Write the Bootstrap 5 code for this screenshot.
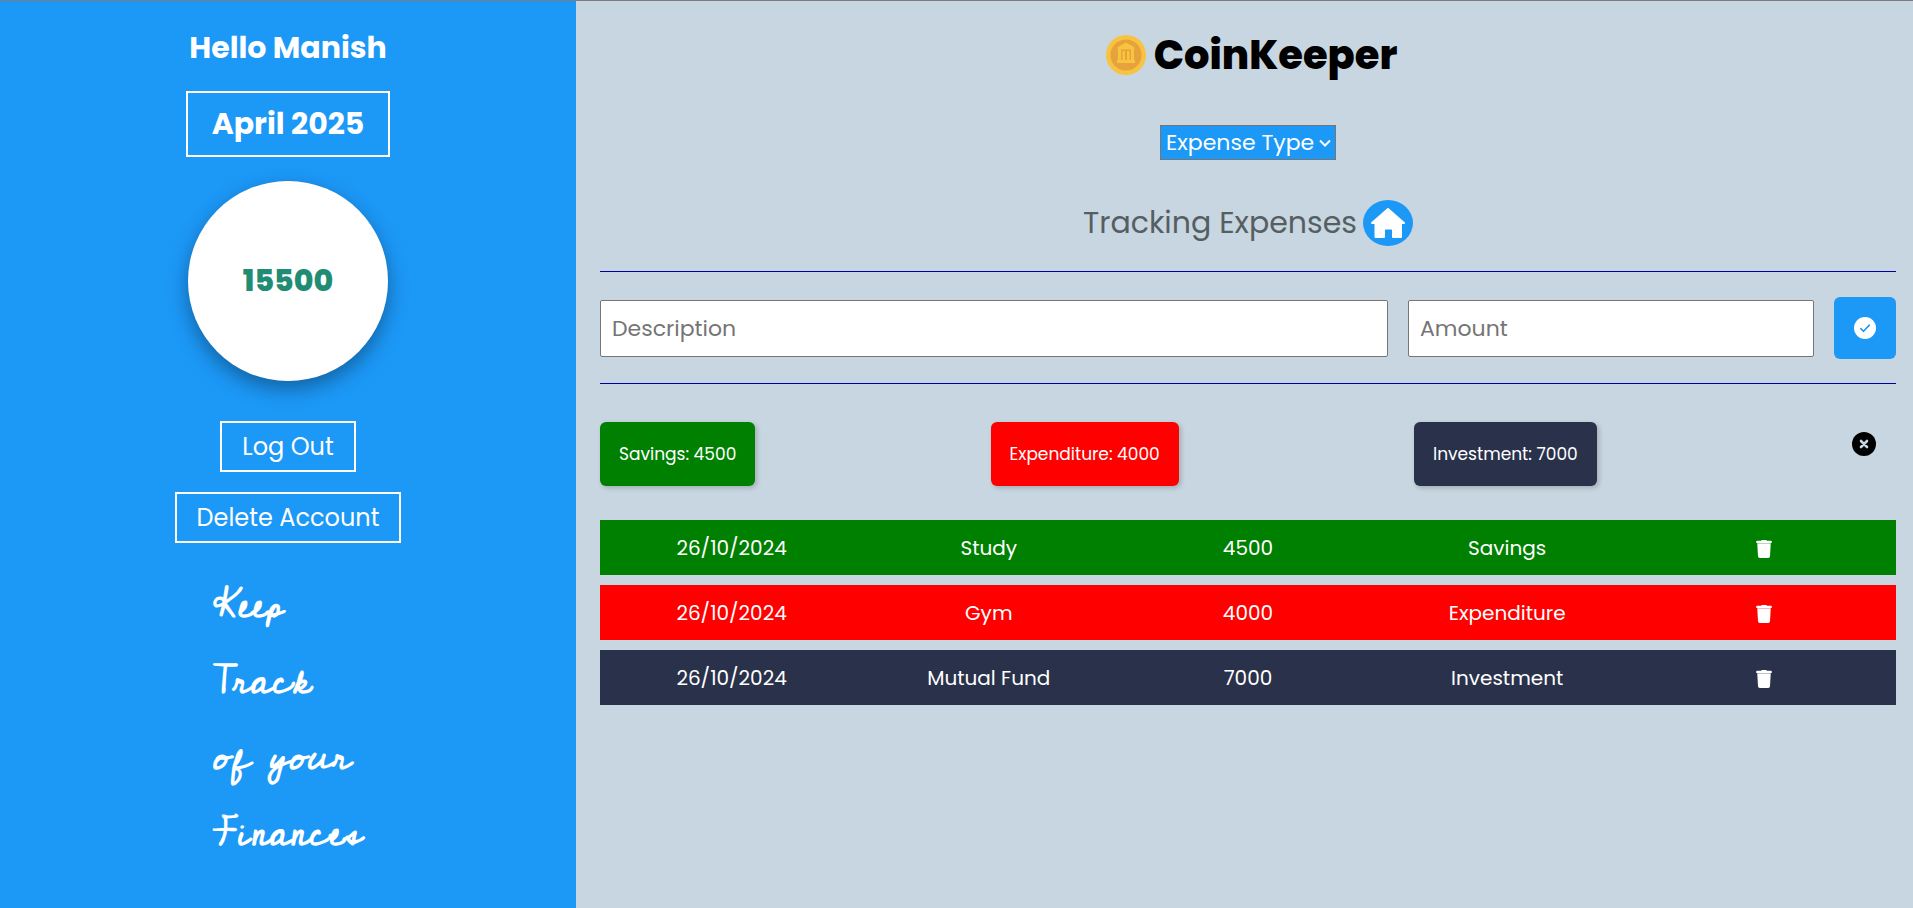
<!DOCTYPE html>
<html lang="en">
<head>
<meta charset="utf-8">
<meta name="viewport" content="width=device-width, initial-scale=1">
<title>CoinKeeper</title>
<link href="https://cdn.jsdelivr.net/npm/bootstrap@5.3.0/dist/css/bootstrap.min.css" rel="stylesheet">
<style>
  :root { --ck-blue: #1c98f7; --ck-grey: #c8d6e1; --ck-navy: #2a324b; }
  body { font-family: Poppins, Inter, sans-serif; background: var(--ck-grey); color: #000; border-top: 1px solid #7d7a80; }
  .side-panel { flex: 0 0 36rem; max-width: 40%; background: var(--ck-blue); color: #fff; padding-top: 25px; }
  .hello { font-size: 30px; line-height: 44px; font-weight: 700; margin-bottom: 21px; }
  .month-box { border: 2px solid #fff; width: 204px; font-size: 30px; line-height: 62px; font-weight: 700; margin-bottom: 24px; }
  .total-ring { width: 200px; height: 200px; background: #fff; color: #208c74; font-size: 30px; font-weight: 800; padding-bottom: 2px; box-shadow: 0 8px 20px rgba(0,0,0,.35); margin-bottom: 40px; }
  .side-btn { background: transparent; border: 2px solid #fff; color: #fff; font-size: 24px; line-height: 47px; padding: 0 20px; margin-bottom: 20px; }
  .motto { font-family: "Cedarville Cursive", Lato, cursive; font-weight: 700; font-size: 40px; line-height: 76px; width: 150px; margin-top: 4px; }
  .main-panel { padding: 24px 17px 24px 24px; }
  .brand-name { font-size: 40px; line-height: 60px; font-weight: 800; margin-bottom: 40px; padding-left: 7px; gap: 8px; }
  .type-select { appearance: none; background: var(--ck-blue) url("data:image/svg+xml,%3Csvg xmlns='http://www.w3.org/2000/svg' width='12' height='8' viewBox='0 0 12 8'%3E%3Cpath d='M1 1.500L6 6.500L11 1.500' fill='none' stroke='white' stroke-width='2'/%3E%3C/svg%3E") no-repeat right 4px center; color: #fff; border: 1px solid #767676; border-radius: 0; font-size: 22px; width: 176px; height: 35px; padding: 0 16px 0 5px; margin-bottom: 40px; }
  .section-title { font-size: 30px; line-height: 46px; font-weight: 400; color: #555f62; gap: 6px; margin-bottom: 25px; }
  .home-link { width: 50px; height: 46px; border-radius: 50%; background: var(--ck-blue); }
  .entry-form { border-top: 1px solid #0000a8; border-bottom: 1px solid #0000a8; padding: 25px 0 24px; gap: 20px; margin-bottom: 38px; }
  .entry-input { border: 1px solid #767676; border-radius: 2px; background: #fff; font-size: 22px; height: 57px; padding: 0 11px; min-width: 0; }
  .entry-input::placeholder { color: #757575; opacity: 1; }
  .desc-input { flex: 2 1 0; }
  .amount-input { flex: 1 1 0; }
  .add-btn { width: 62px; height: 62px; border: 0; border-radius: 6px; background: var(--ck-blue); }
  .sum-btn { border: 0; border-radius: 6px; color: #fff; font-size: 17px; line-height: 24px; padding: 20px 19px; box-shadow: 2px 2px 5px rgba(0,0,0,.2); }
  .clear-btn { border: 0; background: transparent; width: 64px; height: 44px; }
  .kind-savings { background: green; }
  .kind-expenditure { background: red; }
  .kind-investment { background: var(--ck-navy); }
  .entries { table-layout: fixed; border-collapse: separate; border-spacing: 0 10px; margin-top: 24px; font-size: 20px; color: #fff; }
  .entries td { height: 55px; padding: 0; text-align: center; vertical-align: middle; }
  .entries td:first-child { padding-left: 4px; }
  .entries td:last-child { padding-right: 4px; }
  .trash-btn { border: 0; background: transparent; padding: 0; }
</style>
</head>
<body>
<div class="d-flex min-vh-100">
  <aside class="side-panel d-flex flex-column align-items-center">
    <h2 class="hello">Hello Manish</h2>
    <div class="month-box text-center">April 2025</div>
    <div class="total-ring rounded-circle d-flex align-items-center justify-content-center">15500</div>
    <button type="button" class="side-btn">Log Out</button>
    <button type="button" class="side-btn">Delete Account</button>
    <div class="motto text-nowrap">Keep<br>Track<br>of your<br>Finances</div>
  </aside>

  <main class="main-panel flex-grow-1">
    <h1 class="brand-name d-flex justify-content-center align-items-center">
      <svg width="40" height="40" viewBox="0 0 40 40" aria-hidden="true">
        <circle cx="20" cy="20" r="20" fill="#f8c33f"/>
        <circle cx="20" cy="20" r="15.6" fill="#e6a33c"/>
        <path fill="#f8c33f" d="M20 7.500l8.500 4.700v2.300h-17v-2.300zM12 14.500h3v10.500H12zM16.500 16h2.500v9h-2.500zM21 16h2.500v9H21zM25 14.500h3v10.500h-3zM11 25h18v3H11z"/>
      </svg>
      <span>CoinKeeper</span>
    </h1>
    <div class="text-center">
      <select class="type-select" aria-label="Expense Type">
        <option>Expense Type</option>
        <option>Savings</option>
        <option>Expenditure</option>
        <option>Investment</option>
      </select>
    </div>
    <h2 class="section-title d-flex justify-content-center align-items-center">
      <span>Tracking Expenses</span>
      <a href="#" class="home-link d-flex align-items-center justify-content-center" aria-label="Home">
        <svg width="36" height="32" viewBox="0 0 36 32" aria-hidden="true">
          <path fill="#fff" stroke="#fff" stroke-width="2" stroke-linejoin="round" d="M18 2L34 16H31V30H23V23Q23 21.500 21.500 21.500H15.500Q14 21.500 14 23V30H5.500V16H2z"/>
        </svg>
      </a>
    </h2>

    <form class="entry-form d-flex align-items-center">
      <input type="text" class="entry-input desc-input" placeholder="Description" aria-label="Description">
      <input type="text" class="entry-input amount-input" placeholder="Amount" aria-label="Amount">
      <button type="button" class="add-btn d-flex align-items-center justify-content-center" aria-label="Add">
        <svg width="22" height="22" viewBox="0 0 23 23" aria-hidden="true">
          <circle cx="11.500" cy="11.500" r="11.500" fill="#fff"/>
          <path d="M7 12l3 3 6-6.500" fill="none" stroke="#1c98f7" stroke-width="1.600" stroke-linecap="round" stroke-linejoin="round"/>
        </svg>
      </button>
    </form>

    <div class="d-flex justify-content-between align-items-start">
      <button type="button" class="sum-btn kind-savings">Savings: 4500</button>
      <button type="button" class="sum-btn kind-expenditure">Expenditure: 4000</button>
      <button type="button" class="sum-btn kind-investment">Investment: 7000</button>
      <button type="button" class="clear-btn d-flex align-items-center justify-content-center" aria-label="Clear filter">
        <svg width="24" height="24" viewBox="0 0 24 24" aria-hidden="true">
          <circle cx="12" cy="12" r="12" fill="#000"/>
          <path d="M9 9l6 6M15 9l-6 6" stroke="#c8d6e1" stroke-width="2.600" stroke-linecap="round"/>
        </svg>
      </button>
    </div>

    <svg class="d-none" aria-hidden="true">
      <symbol id="trash" viewBox="0 0 16 18">
        <path fill="currentColor" d="M5 .8Q5.300 0 6.200 0h3.600q.9 0 1.200.8h4q.8 0 .8.900v.8q0 .5-.6.500H.8q-.6 0-.6-.5v-.8q0-.9.800-.9z"/>
        <path fill="currentColor" opacity=".7" d="M1.200 3h13.600v1H1.200z"/>
        <path fill="currentColor" d="M1.300 4h13.400l-.7 12.200Q13.900 18 12.200 18H3.800Q2.100 18 2 16.200z"/>
      </symbol>
    </svg>
    <table class="entries w-100">
      <tbody>
        <tr class="kind-savings">
          <td>26/10/2024</td><td>Study</td><td>4500</td><td>Savings</td>
          <td><button type="button" class="trash-btn text-white" aria-label="Delete Study"><svg width="16" height="18"><use href="#trash"/></svg></button></td>
        </tr>
        <tr class="kind-expenditure">
          <td>26/10/2024</td><td>Gym</td><td>4000</td><td>Expenditure</td>
          <td><button type="button" class="trash-btn text-white" aria-label="Delete Gym"><svg width="16" height="18"><use href="#trash"/></svg></button></td>
        </tr>
        <tr class="kind-investment">
          <td>26/10/2024</td><td>Mutual Fund</td><td>7000</td><td>Investment</td>
          <td><button type="button" class="trash-btn text-white" aria-label="Delete Mutual Fund"><svg width="16" height="18"><use href="#trash"/></svg></button></td>
        </tr>
      </tbody>
    </table>
  </main>
</div>
<script src="https://cdn.jsdelivr.net/npm/bootstrap@5.3.0/dist/js/bootstrap.bundle.min.js"></script>
</body>
</html>
